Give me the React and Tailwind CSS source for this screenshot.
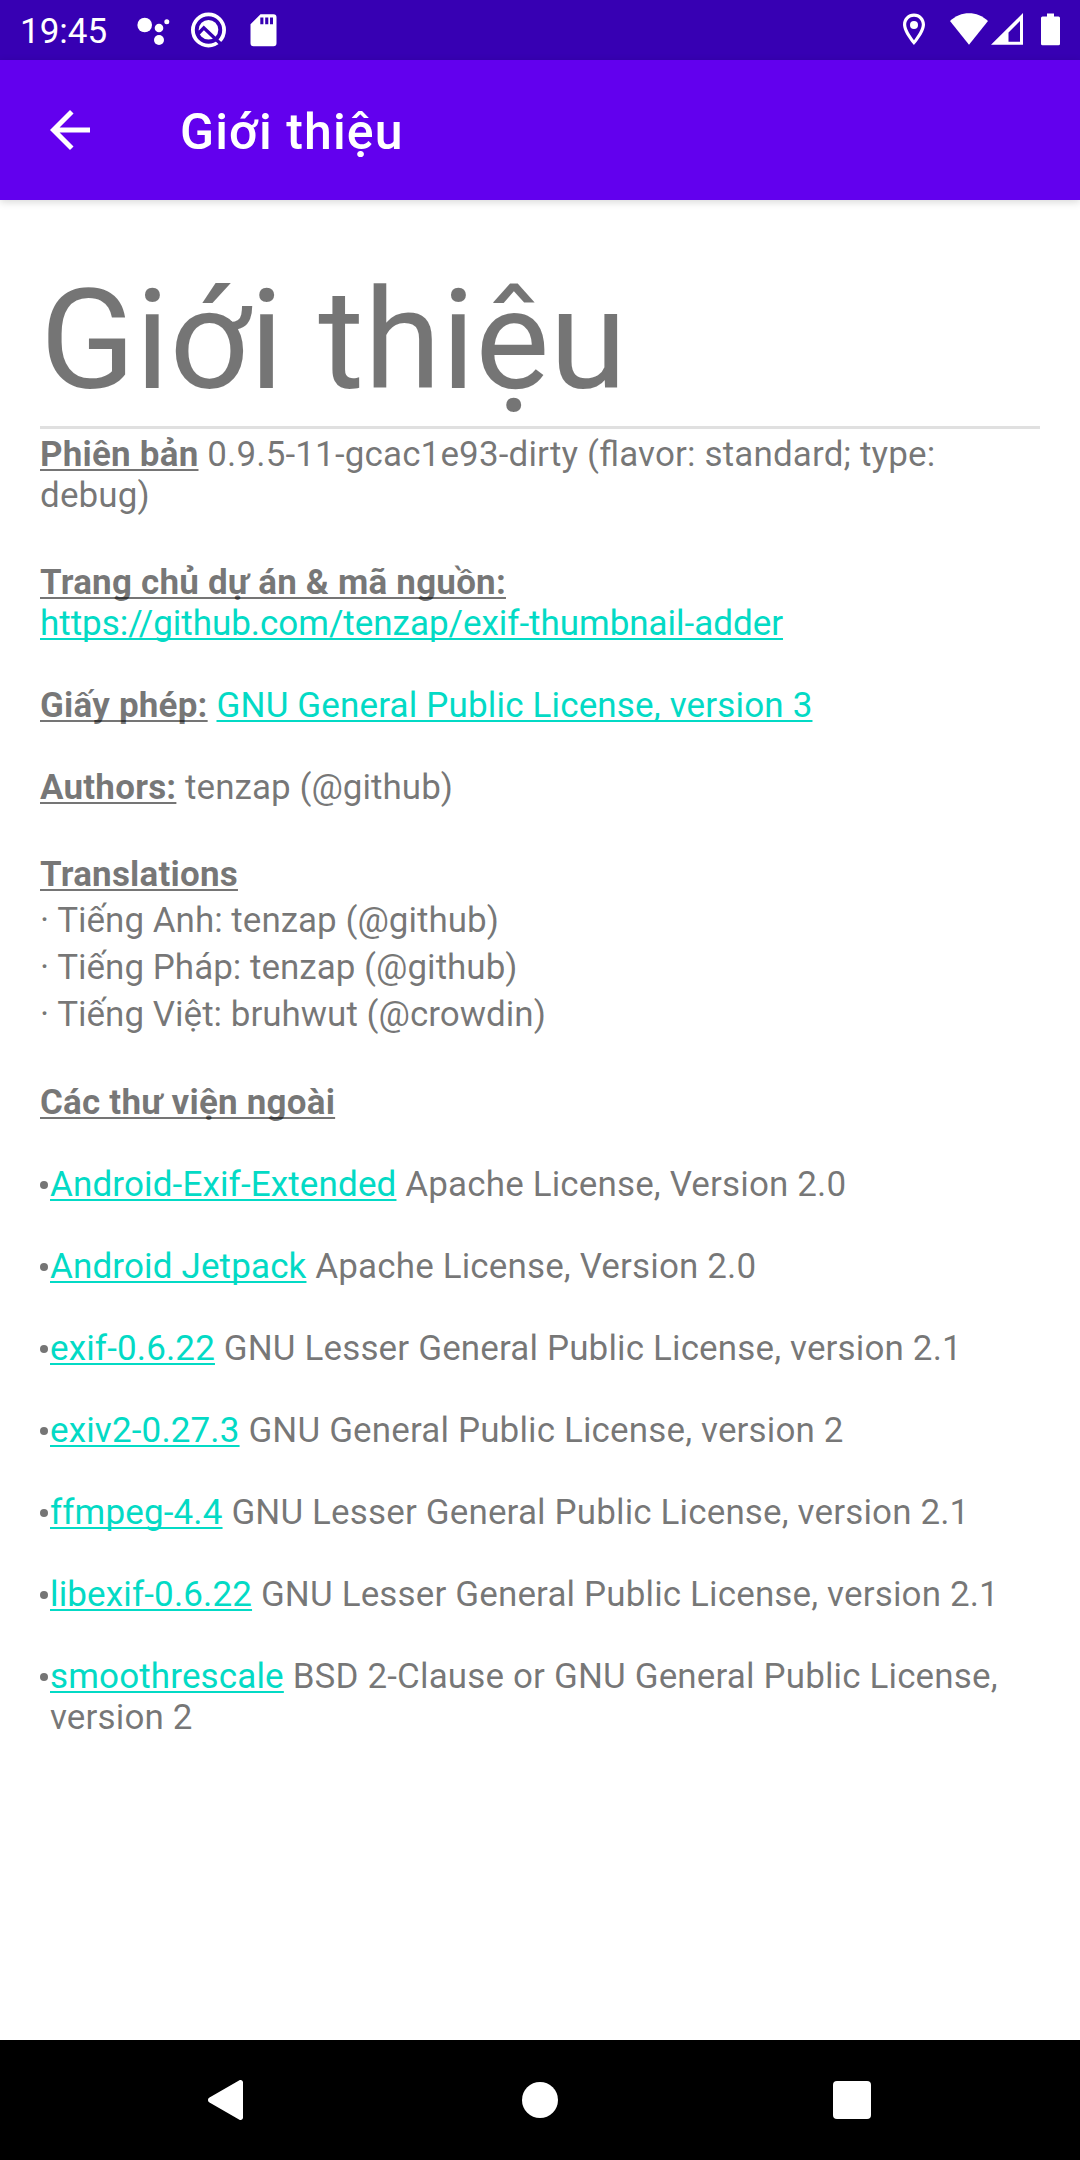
const Head = ({ children }) => (
  <b className="tracking-[0.2px] underline decoration-2 underline-offset-[3px] [text-decoration-skip-ink:none]">{children}</b>
);
const Link = ({ children }) => (
  <a className="text-[#03dac5] underline decoration-2 underline-offset-[3px] [text-decoration-skip-ink:none]">{children}</a>
);

const translations = [
  'Tiếng Anh: tenzap (@github)',
  'Tiếng Pháp: tenzap (@github)',
  'Tiếng Việt: bruhwut (@crowdin)',
];

const libs = [
  ['Android-Exif-Extended', 'Apache License, Version 2.0'],
  ['Android Jetpack', 'Apache License, Version 2.0'],
  ['exif-0.6.22', 'GNU Lesser General Public License, version 2.1'],
  ['exiv2-0.27.3', 'GNU General Public License, version 2'],
  ['ffmpeg-4.4', 'GNU Lesser General Public License, version 2.1'],
  ['libexif-0.6.22', 'GNU Lesser General Public License, version 2.1'],
  ['smoothrescale', 'BSD 2-Clause or GNU General Public License, version 2'],
];

function NotificationIcons() {
  return (
    <svg className="ml-[13px]" width="160" height="60" viewBox="130 0 160 60" fill="currentColor">
      <circle cx="144.7" cy="25" r="7.3" />
      <circle cx="159" cy="28" r="4.3" />
      <circle cx="159" cy="40" r="5" />
      <circle cx="166.8" cy="21.7" r="2.5" />
      <circle cx="208.5" cy="30" r="15.6" fill="none" stroke="currentColor" strokeWidth="3.8" />
      <circle cx="208.5" cy="29.8" r="9.8" />
      <path d="M197 35L203.8 27.8L224 47" fill="none" stroke="#3700b3" strokeWidth="3.4" />
      <path fillRule="evenodd" d="M260.5 14.3H273.5a3 3 0 0 1 3 3V43.3a3 3 0 0 1-3 3H253.5a3 3 0 0 1-3-3V24.3zM260.3 17.5V24.2H263.4V17.5zM265.2 17.5V24.2H268.3V17.5zM270 17.5V24.2H273V17.5z" />
    </svg>
  );
}

function SystemIcons() {
  return (
    <svg width="180" height="60" viewBox="900 0 180 60" fill="currentColor">
      <path fillRule="evenodd" d="M914 13.5c-6.1 0-11 4.9-11 11C903 32.8 914 45 914 45s11-12.2 11-20.5c0-6.1-4.9-11-11-11zM914 16.7c4.3 0 7.8 3.5 7.8 7.8 0 4.5-4.5 11.5-7.8 15.7-3.3-4.2-7.8-11.2-7.8-15.7 0-4.3 3.5-7.8 7.8-7.8z" />
      <circle cx="914" cy="25" r="4" />
      <path d="M950 21C960.5 10.5 977.5 10.5 988 21L969 44.7z" />
      <path fillRule="evenodd" d="M1023 13V44.7H991zM1020 21L1008.5 32.5V41.7H1020z" />
      <path d="M1047 13.5h7v3h4.500a1.500 1.500 0 0 1 1.500 1.500V43.7a1.500 1.500 0 0 1-1.500 1.500h-16a1.500 1.500 0 0 1-1.500-1.500V18a1.500 1.500 0 0 1 1.500-1.500h4.500z" />
    </svg>
  );
}

function StatusBar() {
  return (
    <header className="flex h-[60px] shrink-0 items-center justify-between bg-[#3700b3] text-white">
      <div className="flex items-center">
        <span className="w-[117px] pl-5 pt-[3px] text-[35px] leading-[57px]">19:45</span>
        <NotificationIcons />
      </div>
      <SystemIcons />
    </header>
  );
}

export default function App() {
  return (
    <div className="flex h-[2160px] w-[1080px] flex-col bg-white font-['Roboto',sans-serif] text-[#0000008a]">
      <StatusBar />
      <div className="flex h-[140px] shrink-0 items-center bg-[#6200ee] pl-10 text-white shadow-[0_2px_8px_rgba(0,0,0,0.16)]">
        <svg width="60" height="60" viewBox="0 0 24 24" fill="currentColor">
          <path d="M20 11H7.83l5.59-5.59L12 4l-8 8 8 8 1.41-1.41L7.83 13H20v-2z" />
        </svg>
        <span className="pl-20 pt-[5px] text-[50px] font-medium leading-[59px] tracking-[1.1px]">Giới thiệu</span>
      </div>
      <main className="flex-1 px-10 pt-[58px] text-[35px] leading-[41px] [font-feature-settings:'liga']">
        <h1 className="h-[171px] border-b-[3px] border-[#e0e0e0] text-[140px] leading-[164px]">Giới thiệu</h1>
        <p className="pt-[5px] tracking-[0.14px]"><Head>Phiên bản</Head> 0.9.5-11-gcac1e93-dirty (flavor: standard; type: debug)</p>
        <p className="mt-[46px]"><Head>Trang chủ dự án &amp; mã nguồn:</Head></p>
        <p className="tracking-[-0.03px]"><Link>https://github.com/tenzap/exif-thumbnail-adder</Link></p>
        <p className="mt-[41px] tracking-[0.16px]"><Head>Giấy phép:</Head> <Link>GNU General Public License, version 3</Link></p>
        <p className="mt-[41px] tracking-[0.03px]"><Head>Authors:</Head> tenzap (@github)</p>
        <p className="mt-[46px]"><Head>Translations</Head></p>
        <ul className="-mt-px">
          {translations.map((t) => <li key={t} className="pt-1.5">· {t}</li>)}
        </ul>
        <p className="mt-[47px]"><Head>Các thư viện ngoài</Head></p>
        <ul className="tracking-[0.14px]">
          {libs.map(([name, license]) => (
            <li className="mt-[41px] flex items-start" key={name}>
              <span className="flex h-[41px] w-[10px] shrink-0 items-center">
                <i className="size-[8px] rounded-full bg-[#757575]" />
              </span>
              <span><Link>{name}</Link> {license}</span>
            </li>
          ))}
        </ul>
      </main>
      <nav className="flex h-[120px] shrink-0 items-center bg-black pl-[208px] text-white">
        <svg width="35" height="40" viewBox="0 0 35 40" fill="currentColor">
          <path d="M31 .6C33-.6 35 .5 35 2.5V37.5C35 39.5 33 40.6 31 39.4L1.5 22.5C-.5 21.3-.5 18.7 1.5 17.5z" />
        </svg>
        <i className="ml-[279px] size-[36px] rounded-full bg-white" />
        <i className="ml-[275px] size-[38px] rounded-[4px] bg-white" />
      </nav>
    </div>
  );
}
